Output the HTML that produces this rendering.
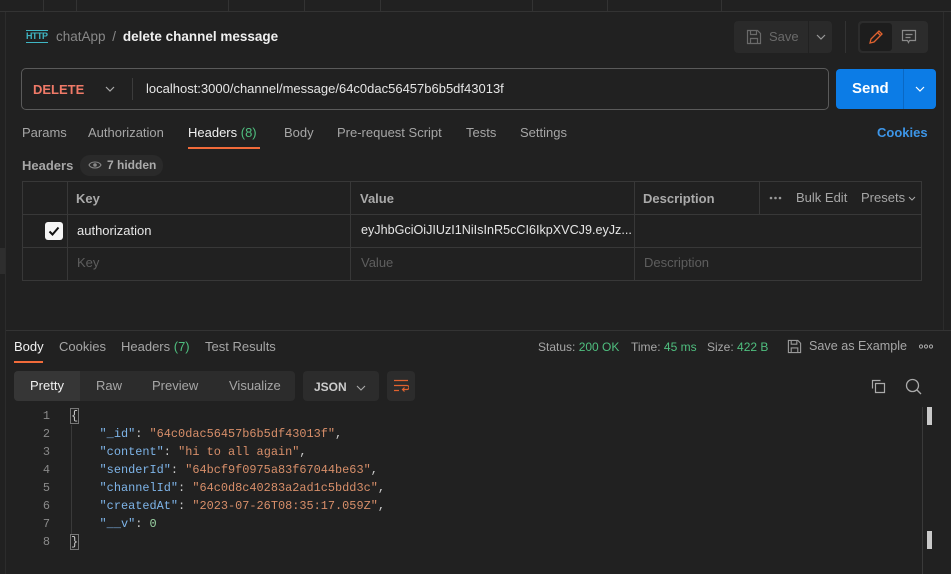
<!DOCTYPE html>
<html><head><meta charset="utf-8"><style>
*{box-sizing:border-box;margin:0;padding:0}
body{width:951px;height:574px;background:#212121;font-family:"Liberation Sans",sans-serif;color:#a6a6a6;font-size:13px;position:relative;overflow:hidden}
.a{position:absolute;white-space:nowrap}
.w{color:#f0f0f0}
.g{color:#4fbf7f}
.mono{font-family:"Liberation Mono",monospace;font-size:11.9px}
</style></head><body>
<div class="a" style="left:0;top:0;width:951px;height:12px;border-bottom:1px solid #333"></div>
<div class="a" style="left:43px;top:0;width:1px;height:12px;background:#333"></div>
<div class="a" style="left:76px;top:0;width:1px;height:12px;background:#333"></div>
<div class="a" style="left:228px;top:0;width:1px;height:12px;background:#333"></div>
<div class="a" style="left:304px;top:0;width:1px;height:12px;background:#333"></div>
<div class="a" style="left:380px;top:0;width:1px;height:12px;background:#333"></div>
<div class="a" style="left:532px;top:0;width:76px;height:12px;border-left:1px solid #333;border-right:1px solid #333"></div>
<div class="a" style="left:721px;top:0;width:1px;height:12px;background:#333"></div>
<div class="a" style="left:5px;top:12px;width:1px;height:562px;background:#2c2c2c"></div>
<div class="a" style="left:943px;top:12px;width:1px;height:318px;background:#2c2c2c"></div>
<div class="a" style="left:0;top:248px;width:5px;height:26px;background:#2e2e2e"></div>

<div class="a" style="left:26px;top:30px;font-size:9px;font-weight:bold;color:#3fb6c4;letter-spacing:-0.5px;border-top:1px solid #3fb6c4;border-bottom:1px solid #3fb6c4;line-height:11px">HTTP</div>
<div class="a" style="left:56px;top:29px;font-size:13.5px;color:#888">chatApp <span style="margin:0 3px">/</span> <b class="w">delete channel message</b></div>

<div class="a" style="left:734px;top:21px;width:98px;height:32px;background:#2a2a2a;border-radius:4px"></div>
<div class="a" style="left:808px;top:21px;width:1px;height:32px;background:#212121"></div>
<svg class="a" style="left:746px;top:29px" width="16" height="16" viewBox="0 0 16 16" fill="none" stroke="#6a6a6a" stroke-width="1.2"><path d="M1.5 1.5h10l3 3v10h-13z M4.5 1.5v4h6v-4 M4.5 14.5v-5h7v5"/></svg>
<div class="a" style="left:769px;top:29px;font-size:13px;color:#6a6a6a">Save</div>
<svg class="a" style="left:816px;top:34px" width="10" height="6"><path d="M1 1l4 4 4-4" fill="none" stroke="#999" stroke-width="1.2"/></svg>
<div class="a" style="left:845px;top:21px;width:1px;height:32px;background:#333"></div>
<div class="a" style="left:858px;top:21px;width:70px;height:32px;background:#2c2c2c;border-radius:4px"></div>
<div class="a" style="left:860px;top:23px;width:32px;height:28px;background:#1d1d1d;border-radius:3px"></div>
<svg class="a" style="left:868px;top:29px" width="16" height="16" viewBox="0 0 16 16" fill="none" stroke="#e0622f" stroke-width="1.3"><path d="M2 14l1-4 8-8 3 3-8 8z M9.5 3.5l3 3"/></svg>
<svg class="a" style="left:901px;top:29px" width="16" height="16" viewBox="0 0 16 16" fill="none" stroke="#8a8a8a" stroke-width="1.2"><path d="M1.5 1.5h13v10h-6l-1 2-1-2h-5z M4.5 5.5h7 M4.5 8.5h5"/></svg>

<div class="a" style="left:21px;top:68px;width:808px;height:42px;border:1px solid #5a5a5a;border-radius:5px"></div>
<div class="a" style="left:33px;top:82px;font-size:13px;font-weight:bold;color:#f07a68">DELETE</div>
<svg class="a" style="left:105px;top:86px" width="10" height="6"><path d="M1 1l4 4 4-4" fill="none" stroke="#aaa" stroke-width="1.2"/></svg>
<div class="a" style="left:132px;top:78px;width:1px;height:22px;background:#3c3c3c"></div>
<div class="a w" style="left:146px;top:81px;font-size:13px;color:#e6e6e6">localhost:3000/channel/message/64c0dac56457b6b5df43013f</div>
<div class="a" style="left:836px;top:69px;width:100px;height:40px;background:#0c7ce6;border-radius:4px"></div>
<div class="a" style="left:903px;top:69px;width:1px;height:40px;background:#0a68c4"></div>
<div class="a" style="left:852px;top:80px;font-size:15px;font-weight:bold;color:#fff">Send</div>
<svg class="a" style="left:915px;top:86px" width="10" height="6"><path d="M1 1l4 4 4-4" fill="none" stroke="#fff" stroke-width="1.2"/></svg>

<div class="a" style="left:22px;top:125px">Params</div>
<div class="a" style="left:88px;top:125px">Authorization</div>
<div class="a w" style="left:188px;top:125px">Headers <span class="g">(8)</span></div>
<div class="a" style="left:188px;top:147px;width:72px;height:2px;background:#f26b3a"></div>
<div class="a" style="left:284px;top:125px">Body</div>
<div class="a" style="left:337px;top:125px">Pre-request Script</div>
<div class="a" style="left:466px;top:125px">Tests</div>
<div class="a" style="left:520px;top:125px">Settings</div>
<div class="a" style="left:877px;top:125px;font-weight:bold;color:#3d96e8">Cookies</div>

<div class="a" style="left:22px;top:158px;font-weight:bold;color:#a6a6a6">Headers</div>
<div class="a" style="left:80px;top:155px;width:83px;height:21px;background:#2a2a2a;border-radius:10px"></div>
<svg class="a" style="left:88px;top:160px" width="14" height="10" viewBox="0 0 14 10"><path d="M1 5c2-4 10-4 12 0c-2 4-10 4-12 0z" fill="none" stroke="#888" stroke-width="1.1"/><circle cx="7" cy="5" r="1.8" fill="#888"/></svg>
<div class="a" style="left:107px;top:158px;font-size:12px;font-weight:bold;color:#aaa">7 hidden</div>

<div class="a" style="left:22px;top:181px;width:900px;height:100px;border:1px solid #383838"></div>
<div class="a" style="left:67px;top:181px;width:1px;height:100px;background:#383838"></div>
<div class="a" style="left:350px;top:181px;width:1px;height:100px;background:#383838"></div>
<div class="a" style="left:634px;top:181px;width:1px;height:100px;background:#383838"></div>
<div class="a" style="left:759px;top:181px;width:1px;height:33px;background:#383838"></div>
<div class="a" style="left:22px;top:214px;width:900px;height:1px;background:#383838"></div>
<div class="a" style="left:22px;top:247px;width:900px;height:1px;background:#383838"></div>
<div class="a" style="left:76px;top:191px;font-weight:bold;color:#aaa">Key</div>
<div class="a" style="left:360px;top:191px;font-weight:bold;color:#aaa">Value</div>
<div class="a" style="left:643px;top:191px;font-weight:bold;color:#aaa">Description</div>
<svg class="a" style="left:769px;top:196px" width="13" height="4"><circle cx="2" cy="2" r="1.3" fill="#999"/><circle cx="6.5" cy="2" r="1.3" fill="#999"/><circle cx="11" cy="2" r="1.3" fill="#999"/></svg>
<div class="a" style="left:796px;top:190px">Bulk Edit</div>
<div class="a" style="left:861px;top:190px">Presets</div>
<svg class="a" style="left:908px;top:196px" width="8" height="5"><path d="M1 1l3 3 3-3" fill="none" stroke="#aaa" stroke-width="1"/></svg>
<div class="a" style="left:45px;top:222px;width:18px;height:18px;background:#f5f5f5;border-radius:3px"></div>
<svg class="a" style="left:45px;top:222px" width="18" height="18"><path d="M4.5 9.5l3 3 6-7" fill="none" stroke="#111" stroke-width="2"/></svg>
<div class="a" style="left:77px;top:223px;color:#e6e6e6">authorization</div>
<div class="a" style="left:361px;top:223px;color:#e6e6e6;font-size:12.6px">eyJhbGciOiJIUzI1NiIsInR5cCI6IkpXVCJ9.eyJz...</div>
<div class="a" style="left:77px;top:255px;color:#5e5e5e">Key</div>
<div class="a" style="left:361px;top:255px;color:#5e5e5e">Value</div>
<div class="a" style="left:644px;top:255px;color:#5e5e5e">Description</div>

<div class="a" style="left:6px;top:330px;width:945px;height:1px;background:#333"></div>
<div class="a w" style="left:14px;top:339px">Body</div>
<div class="a" style="left:14px;top:361px;width:29px;height:2px;background:#f26b3a"></div>
<div class="a" style="left:59px;top:339px">Cookies</div>
<div class="a" style="left:121px;top:339px">Headers <span class="g">(7)</span></div>
<div class="a" style="left:205px;top:339px">Test Results</div>
<div class="a" style="left:538px;top:340px;font-size:12px">Status: <span class="g">200 OK</span></div>
<div class="a" style="left:631px;top:340px;font-size:12px">Time: <span class="g">45 ms</span></div>
<div class="a" style="left:707px;top:340px;font-size:12px">Size: <span class="g">422 B</span></div>
<svg class="a" style="left:787px;top:339px" width="15" height="15" viewBox="0 0 16 16" fill="none" stroke="#999" stroke-width="1.2"><path d="M1.5 1.5h10l3 3v10h-13z M4.5 1.5v4h6v-4 M4.5 14.5v-5h7v5"/></svg>
<div class="a" style="left:809px;top:339px;font-size:12.6px">Save as Example</div>
<svg class="a" style="left:919px;top:344px" width="14" height="5"><circle cx="2" cy="2.5" r="1.6" fill="none" stroke="#aaa"/><circle cx="7" cy="2.5" r="1.6" fill="none" stroke="#aaa"/><circle cx="12" cy="2.5" r="1.6" fill="none" stroke="#aaa"/></svg>

<div class="a" style="left:14px;top:371px;width:281px;height:30px;background:#2c2c2c;border-radius:4px"></div>
<div class="a" style="left:14px;top:371px;width:66px;height:30px;background:#363636;border-radius:4px 0 0 4px"></div>
<div class="a w" style="left:30px;top:378px">Pretty</div>
<div class="a" style="left:96px;top:378px">Raw</div>
<div class="a" style="left:152px;top:378px">Preview</div>
<div class="a" style="left:229px;top:378px">Visualize</div>
<div class="a" style="left:303px;top:371px;width:76px;height:30px;background:#2c2c2c;border-radius:4px"></div>
<div class="a" style="left:314px;top:380px;font-size:12px;font-weight:bold;color:#ccc">JSON</div>
<svg class="a" style="left:356px;top:385px" width="10" height="6"><path d="M1 1l4 4 4-4" fill="none" stroke="#aaa" stroke-width="1.1"/></svg>
<div class="a" style="left:387px;top:371px;width:28px;height:30px;background:#2c2c2c;border-radius:4px"></div>
<svg class="a" style="left:393px;top:378px" width="16" height="16" viewBox="0 0 16 16" fill="none" stroke="#e0622f" stroke-width="1.2"><path d="M1 2.5h14 M1 7.5h13a2 2 0 0 1 0 4h-4 M11.5 9.5l-2 2 2 2 M1 12.5h5"/></svg>
<svg class="a" style="left:871px;top:379px" width="15" height="15" viewBox="0 0 15 15" fill="none" stroke="#aaa" stroke-width="1.2"><path d="M1.5 9.5v-8h8 M4.5 4.5h9v9h-9z"/></svg>
<svg class="a" style="left:905px;top:378px" width="17" height="17" viewBox="0 0 17 17" fill="none" stroke="#aaa" stroke-width="1.3"><circle cx="7.5" cy="7.5" r="6"/><path d="M12 12l4 4"/></svg>

<div class="a" style="left:927px;top:407px;width:5px;height:18px;background:#c9c9c9"></div>
<div class="a" style="left:927px;top:531px;width:5px;height:18px;background:#c9c9c9"></div>
<div class="a" style="left:922px;top:407px;width:1px;height:167px;background:#3a3a3a"></div>
<div class="a" style="left:71px;top:425px;width:1px;height:110px;background:#3a3a3a"></div>

<div class="a mono" style="left:30px;top:407px;width:20px;text-align:right;line-height:18px;color:#8a8a8a">1<br>2<br>3<br>4<br>5<br>6<br>7<br>8</div>
<div class="a mono" style="left:71px;top:407px;line-height:18px;color:#ccc"><span style="outline:1px solid #777">{</span><br>
&nbsp;&nbsp;&nbsp;&nbsp;<span style="color:#7eb4e8">"_id"</span>: <span style="color:#d88f6a">"64c0dac56457b6b5df43013f"</span>,<br>
&nbsp;&nbsp;&nbsp;&nbsp;<span style="color:#7eb4e8">"content"</span>: <span style="color:#d88f6a">"hi to all again"</span>,<br>
&nbsp;&nbsp;&nbsp;&nbsp;<span style="color:#7eb4e8">"senderId"</span>: <span style="color:#d88f6a">"64bcf9f0975a83f67044be63"</span>,<br>
&nbsp;&nbsp;&nbsp;&nbsp;<span style="color:#7eb4e8">"channelId"</span>: <span style="color:#d88f6a">"64c0d8c40283a2ad1c5bdd3c"</span>,<br>
&nbsp;&nbsp;&nbsp;&nbsp;<span style="color:#7eb4e8">"createdAt"</span>: <span style="color:#d88f6a">"2023-07-26T08:35:17.059Z"</span>,<br>
&nbsp;&nbsp;&nbsp;&nbsp;<span style="color:#7eb4e8">"__v"</span>: <span style="color:#9bd4a4">0</span><br>
<span style="outline:1px solid #777">}</span></div>
</body></html>
